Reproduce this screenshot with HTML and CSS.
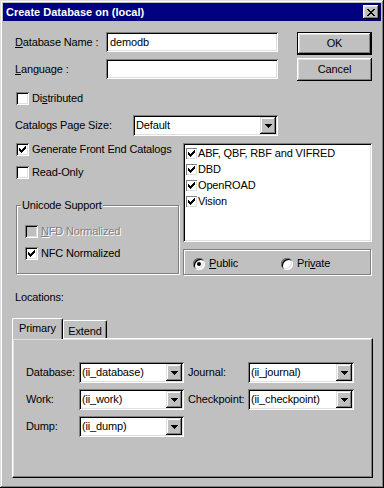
FILE: index.html
```html
<!DOCTYPE html>
<html lang="en">

<head>
  <meta charset="UTF-8">
  <title>Create Database on (local)</title>
  <link rel="stylesheet" href="styles.css">
</head>

<body>
  <div class="window">
    <div class="titlebar">
      <span class="title">Create Database on (local)</span>
      <div class="close">
        <svg width="8" height="7" viewBox="0 0 8 7" shape-rendering="crispEdges"><path d="M0 0h2v1h-2zM6 0h2v1h-2zM1 1h2v1h-2zM5 1h2v1h-2zM2 2h4v1h-4zM3 3h2v1h-2zM2 4h4v1h-4zM1 5h2v1h-2zM5 5h2v1h-2zM0 6h2v1h-2zM6 6h2v1h-2z"/></svg>
      </div>
    </div>

    <div class="dialog">
      <div class="top">
        <div class="fields">
          <div class="row">
            <span class="label name-label"><u>D</u>atabase Name :</span>
            <div class="edit">demodb</div>
          </div>
          <div class="row">
            <span class="label name-label"><u>L</u>anguage :</span>
            <div class="edit"></div>
          </div>
        </div>
        <div class="buttons">
          <div class="btn default">OK</div>
          <div class="btn">Cancel</div>
        </div>
      </div>

      <div class="check distributed">
        <span class="box"></span>
        <span>Di<u>s</u>tributed</span>
      </div>

      <div class="row page-size">
        <span class="label size-label">Catalogs Page Size:</span>
        <div class="combo wide">
          <span class="value">Default</span>
          <span class="drop"><svg width="7" height="4" viewBox="0 0 7 4" shape-rendering="crispEdges"><path d="M0 0h7v1h-7zM1 1h5v1h-5zM2 2h3v1h-3zM3 3h1v1h-1z"/></svg></span>
        </div>
      </div>

      <div class="middle">
        <div class="left">
          <div class="check">
            <span class="box"><svg width="7" height="7" viewBox="0 0 7 7" shape-rendering="crispEdges"><path d="M0 2h1v3h-1zM1 3h1v3h-1zM2 4h1v3h-1zM3 3h1v3h-1zM4 2h1v3h-1zM5 1h1v3h-1zM6 0h1v3h-1z"/></svg></span>
            <span>Generate Front End Catalogs</span>
          </div>
          <div class="check readonly">
            <span class="box"></span>
            <span>Read-Only</span>
          </div>
          <div class="group">
            <span class="legend">Unicode Support</span>
            <div class="check disabled nfd">
              <span class="box"></span>
              <span><u>N</u>FD Normalized</span>
            </div>
            <div class="check nfc">
              <span class="box"><svg width="7" height="7" viewBox="0 0 7 7" shape-rendering="crispEdges"><path d="M0 2h1v3h-1zM1 3h1v3h-1zM2 4h1v3h-1zM3 3h1v3h-1zM4 2h1v3h-1zM5 1h1v3h-1zM6 0h1v3h-1z"/></svg></span>
              <span>NFC Normalized</span>
            </div>
          </div>
        </div>

        <div class="right">
          <div class="listbox">
            <div class="item"><span class="mini"><svg width="7" height="7" viewBox="0 0 7 7" shape-rendering="crispEdges"><path d="M0 2h1v3h-1zM1 3h1v3h-1zM2 4h1v3h-1zM3 3h1v3h-1zM4 2h1v3h-1zM5 1h1v3h-1zM6 0h1v3h-1z"/></svg></span>ABF, QBF, RBF and VIFRED</div>
            <div class="item"><span class="mini"><svg width="7" height="7" viewBox="0 0 7 7" shape-rendering="crispEdges"><path d="M0 2h1v3h-1zM1 3h1v3h-1zM2 4h1v3h-1zM3 3h1v3h-1zM4 2h1v3h-1zM5 1h1v3h-1zM6 0h1v3h-1z"/></svg></span>DBD</div>
            <div class="item"><span class="mini"><svg width="7" height="7" viewBox="0 0 7 7" shape-rendering="crispEdges"><path d="M0 2h1v3h-1zM1 3h1v3h-1zM2 4h1v3h-1zM3 3h1v3h-1zM4 2h1v3h-1zM5 1h1v3h-1zM6 0h1v3h-1z"/></svg></span>OpenROAD</div>
            <div class="item"><span class="mini"><svg width="7" height="7" viewBox="0 0 7 7" shape-rendering="crispEdges"><path d="M0 2h1v3h-1zM1 3h1v3h-1zM2 4h1v3h-1zM3 3h1v3h-1zM4 2h1v3h-1zM5 1h1v3h-1zM6 0h1v3h-1z"/></svg></span>Vision</div>
          </div>
          <div class="radios">
            <div class="radio first"><span class="circle"><span class="dot"></span></span><span><u>P</u>ublic</span></div>
            <div class="radio"><span class="circle"></span><span>Pri<u>v</u>ate</span></div>
          </div>
        </div>
      </div>

      <div class="locations">Locations:</div>

      <div class="tabset">
        <div class="tabs">
          <div class="tab active">Primary</div>
          <div class="tab">Extend</div>
        </div>
        <div class="panel">
          <span class="label">Database:</span>
          <div class="combo">
            <span class="value">(ii_database)</span>
            <span class="drop"><svg width="7" height="4" viewBox="0 0 7 4" shape-rendering="crispEdges"><path d="M0 0h7v1h-7zM1 1h5v1h-5zM2 2h3v1h-3zM3 3h1v1h-1z"/></svg></span>
          </div>
          <span class="label second">Journal:</span>
          <div class="combo">
            <span class="value">(ii_journal)</span>
            <span class="drop"><svg width="7" height="4" viewBox="0 0 7 4" shape-rendering="crispEdges"><path d="M0 0h7v1h-7zM1 1h5v1h-5zM2 2h3v1h-3zM3 3h1v1h-1z"/></svg></span>
          </div>

          <span class="label">Work:</span>
          <div class="combo">
            <span class="value">(ii_work)</span>
            <span class="drop"><svg width="7" height="4" viewBox="0 0 7 4" shape-rendering="crispEdges"><path d="M0 0h7v1h-7zM1 1h5v1h-5zM2 2h3v1h-3zM3 3h1v1h-1z"/></svg></span>
          </div>
          <span class="label second">Checkpoint:</span>
          <div class="combo">
            <span class="value">(ii_checkpoint)</span>
            <span class="drop"><svg width="7" height="4" viewBox="0 0 7 4" shape-rendering="crispEdges"><path d="M0 0h7v1h-7zM1 1h5v1h-5zM2 2h3v1h-3zM3 3h1v1h-1z"/></svg></span>
          </div>

          <span class="label">Dump:</span>
          <div class="combo">
            <span class="value">(ii_dump)</span>
            <span class="drop"><svg width="7" height="4" viewBox="0 0 7 4" shape-rendering="crispEdges"><path d="M0 0h7v1h-7zM1 1h5v1h-5zM2 2h3v1h-3zM3 3h1v1h-1z"/></svg></span>
          </div>
        </div>
      </div>
    </div>
  </div>
</body>

</html>
```

FILE: styles.css
```css
* {
  box-sizing: border-box;
}

body {
  margin: 0;
  overflow: hidden;
  font-family: "Liberation Sans", Arial, sans-serif;
  font-size: 11px;
  line-height: 13px;
  letter-spacing: -0.15px;
  white-space: nowrap;
  color: #000;
  background: #c0c0c0;
}

.window {
  width: 384px;
  height: 488px;
  padding: 3px;
  background: #c0c0c0;
  box-shadow: inset -1px -1px #000, inset 1px 1px #dfdfdf, inset -2px -2px #808080, inset 2px 2px #fff;
}

.titlebar {
  height: 18px;
  background: #000080;
  color: #fff;
  display: flex;
  align-items: center;
  justify-content: space-between;
  padding: 0 2px 0 3px;
}

.title {
  font-weight: bold;
  letter-spacing: 0;
}

.close {
  width: 16px;
  height: 14px;
  background: #c0c0c0;
  display: flex;
  align-items: center;
  justify-content: center;
  box-shadow: inset -1px -1px #000, inset 1px 1px #fff, inset -2px -2px #808080, inset 2px 2px #dfdfdf;
}

.close svg {
  fill: #000;
  margin-left: -1px;
}

.dialog {
  padding: 0 9px 0 12px;
}

/* top part */

.top {
  display: flex;
  justify-content: space-between;
  margin-top: 11px;
}

.fields {
  width: 263px;
  display: flex;
  flex-direction: column;
  gap: 7px;
}

.row {
  display: flex;
  align-items: center;
}

.label {
  flex: none;
}

.name-label {
  width: 91px;
}

.size-label {
  width: 118px;
}

.edit {
  width: 172px;
  height: 20px;
  padding-left: 4px;
  line-height: 20px;
  background: #fff;
  box-shadow: inset 1px 1px #808080, inset -1px -1px #fff, inset 2px 2px #000, inset -2px -2px #dfdfdf;
}

.buttons {
  width: 75px;
  display: flex;
  flex-direction: column;
  gap: 3px;
}

.btn {
  height: 23px;
  display: flex;
  align-items: center;
  justify-content: center;
  box-shadow: inset -1px -1px #000, inset 1px 1px #fff, inset -2px -2px #808080, inset 2px 2px #dfdfdf;
}

.btn.default {
  box-shadow: inset 0 0 0 1px #000, inset -2px -2px #000, inset 2px 2px #fff, inset -3px -3px #808080, inset 3px 3px #dfdfdf;
}

/* checkboxes */

.check {
  display: flex;
  align-items: center;
  gap: 3px;
  height: 13px;
  margin-left: 1px;
}

.box {
  width: 13px;
  height: 13px;
  flex: none;
  padding: 3px;
  display: flex;
  background: #fff;
  box-shadow: inset 1px 1px #808080, inset -1px -1px #fff, inset 2px 2px #000, inset -2px -2px #dfdfdf;
}

.box svg {
  fill: #000;
}

.check.disabled .box {
  background: #c0c0c0;
}

.check.disabled {
  color: #808080;
  text-shadow: 1px 1px #fff;
}

.distributed {
  margin-top: 11px;
}

.page-size {
  margin-top: 10px;
}

/* combos */

.combo {
  height: 21px;
  padding: 2px;
  display: flex;
  background: #fff;
  box-shadow: inset 1px 1px #808080, inset -1px -1px #fff, inset 2px 2px #000, inset -2px -2px #dfdfdf;
}

.combo.wide {
  width: 145px;
}

.combo .value {
  flex: 1;
  padding-left: 1px;
  line-height: 17px;
}

.drop {
  width: 16px;
  height: 17px;
  flex: none;
  display: flex;
  align-items: center;
  justify-content: center;
  background: #c0c0c0;
  box-shadow: inset -1px -1px #000, inset 1px 1px #dfdfdf, inset -2px -2px #808080, inset 2px 2px #fff;
}

.drop svg {
  fill: #000;
}

/* middle part */

.middle {
  display: grid;
  grid-template-columns: 1fr 189px;
  margin-top: 7px;
}

.readonly {
  margin-top: 10px;
}

.group {
  width: 163px;
  height: 69px;
  margin: 26px 0 0 1px;
  padding-left: 8px;
  border: 1px solid #808080;
  box-shadow: inset 1px 1px #fff, 1px 1px #fff;
}

.legend {
  display: block;
  width: max-content;
  margin: -7px 0 0 -4px;
  padding: 0 1px;
  background: #c0c0c0;
}

.group .check {
  margin-left: 0;
}

.nfd {
  margin-top: 13px;
}

.nfc {
  margin-top: 9px;
}

.listbox {
  height: 99px;
  padding: 2px 0 0 3px;
  background: #fff;
  box-shadow: inset 1px 1px #808080, inset -1px -1px #fff, inset 2px 2px #000, inset -2px -2px #dfdfdf;
}

.item {
  height: 16px;
  display: flex;
  align-items: center;
  gap: 1px;
}

.mini {
  width: 11px;
  height: 11px;
  padding: 2px;
  display: flex;
  background: #fff;
  box-shadow: inset 1px 1px #808080, inset -1px -1px #dfdfdf;
}

.mini svg {
  fill: #000;
}

.radios {
  width: 188px;
  height: 26px;
  margin-top: 7px;
  padding: 3px 0 0 9px;
  display: flex;
  align-items: center;
  border: 1px solid #808080;
  box-shadow: inset 1px 1px #fff, 1px 1px #fff;
}

.radio {
  display: flex;
  align-items: center;
  gap: 4px;
}

.radio.first {
  width: 88px;
}

.circle {
  width: 12px;
  height: 12px;
  flex: none;
  border-radius: 50%;
  background: #fff;
  display: flex;
  align-items: center;
  justify-content: center;
  box-shadow: inset 1px 1px #808080, inset -1px -1px #fff, inset 2px 2px #000, inset -2px -2px #dfdfdf;
}

.dot {
  width: 4px;
  height: 4px;
  border-radius: 50%;
  background: #000;
}

/* locations */

.locations {
  margin-top: 16px;
}

.tabset {
  margin: 14px -1px 0 -3px;
}

.tabs {
  display: flex;
  align-items: flex-end;
  height: 20px;
}

.tab {
  height: 18px;
  padding-top: 4px;
  text-align: center;
  border-top: 1px solid #fff;
  border-left: 1px solid #fff;
  border-right: 1px solid #000;
  border-radius: 2px 2px 0 0;
  box-shadow: inset -1px 0 #808080;
  width: 44px;
}

.tab.active {
  width: 51px;
  height: 21px;
  padding-top: 3px;
  margin-bottom: -1px;
  background: #c0c0c0;
  position: relative;
  z-index: 1;
}

.panel {
  height: 140px;
  padding: 23px 0 0 13px;
  display: grid;
  grid-template-columns: 53px 105px 64px 106px;
  grid-auto-rows: 21px;
  row-gap: 6px;
  align-items: center;
  border-top: 1px solid #fff;
  border-left: 1px solid #fff;
  border-right: 1px solid #000;
  border-bottom: 1px solid #000;
  box-shadow: inset -1px -1px #808080, inset 1px 1px #dfdfdf;
}

.panel .second {
  padding-left: 4px;
}
```
